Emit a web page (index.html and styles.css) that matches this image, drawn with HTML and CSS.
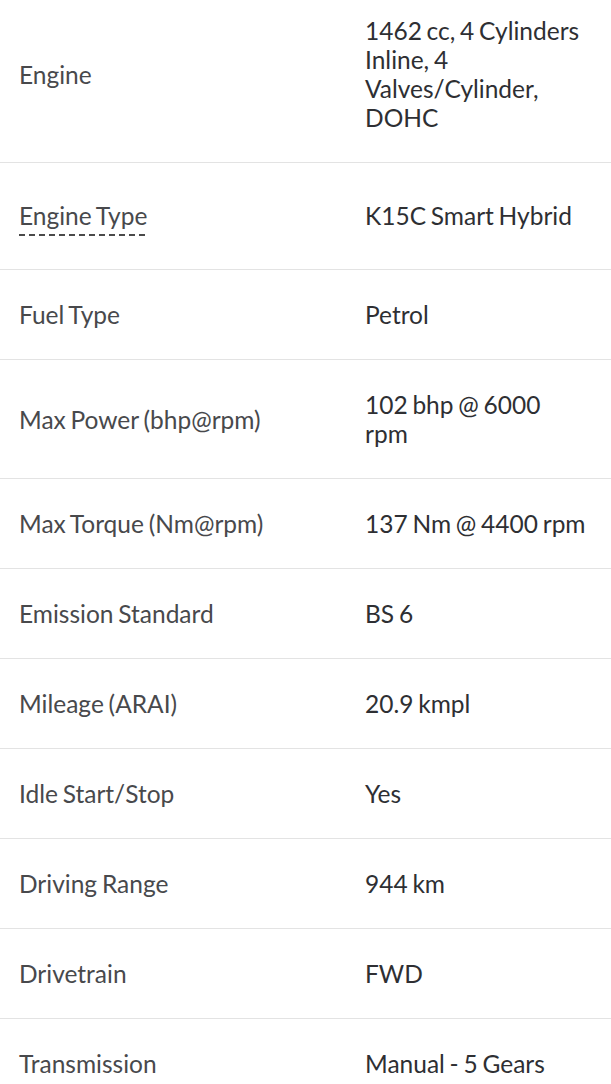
FILE: index.html
```html
<!DOCTYPE html>
<html lang="en">
<head>
<meta charset="utf-8">
<title>Specifications</title>
<link rel="stylesheet" href="styles.css">
</head>
<body>
<div class="specs">
  <div class="row">
    <div class="label">Engine</div>
    <div class="value">1462 cc, 4 Cylinders Inline, 4 Valves/Cylinder, DOHC</div>
  </div>
  <div class="row row--tip">
    <div class="label"><span class="tip">Engine Type</span></div>
    <div class="value">K15C Smart Hybrid</div>
  </div>
  <div class="row">
    <div class="label">Fuel Type</div>
    <div class="value">Petrol</div>
  </div>
  <div class="row">
    <div class="label">Max Power (bhp@rpm)</div>
    <div class="value">102 bhp @ 6000<br>rpm</div>
  </div>
  <div class="row">
    <div class="label">Max Torque (Nm@rpm)</div>
    <div class="value">137 Nm @ 4400 rpm</div>
  </div>
  <div class="row">
    <div class="label">Emission Standard</div>
    <div class="value">BS 6</div>
  </div>
  <div class="row">
    <div class="label">Mileage (ARAI)</div>
    <div class="value">20.9 kmpl</div>
  </div>
  <div class="row">
    <div class="label">Idle Start/Stop</div>
    <div class="value">Yes</div>
  </div>
  <div class="row">
    <div class="label">Driving Range</div>
    <div class="value">944 km</div>
  </div>
  <div class="row">
    <div class="label">Drivetrain</div>
    <div class="value">FWD</div>
  </div>
  <div class="row">
    <div class="label">Transmission</div>
    <div class="value">Manual - 5 Gears</div>
  </div>
</div>
</body>
</html>
```

FILE: styles.css
```css
html, body {
  margin: 0;
  padding: 0;
  background: #ffffff;
}

body {
  font-family: Lato, "Open Sans", sans-serif;
  font-size: 24.5px;
  font-weight: 400;
  line-height: 29px;
  word-spacing: -1.5px;
  color: #2e2f33;
  overflow: hidden;
}

.specs {
  margin-top: -14px;
}

.row {
  display: grid;
  grid-template-columns: 346px 1fr;
  align-items: center;
  padding: 30px 0;
  border-bottom: 1px solid #e3e3e3;
}

.row--tip {
  padding: 38px 0 39px;
}

.label {
  padding-left: 19px;
  padding-right: 19px;
  color: #48494c;
}

.value {
  padding-left: 19px;
  padding-right: 19px;
}

.tip {
  display: inline-block;
  position: relative;
}

.tip::after {
  content: "";
  position: absolute;
  left: 0;
  right: 0;
  bottom: -6px;
  height: 2px;
  background: repeating-linear-gradient(to right, #4a4a4a 0 6px, transparent 6px 10px);
}
```
